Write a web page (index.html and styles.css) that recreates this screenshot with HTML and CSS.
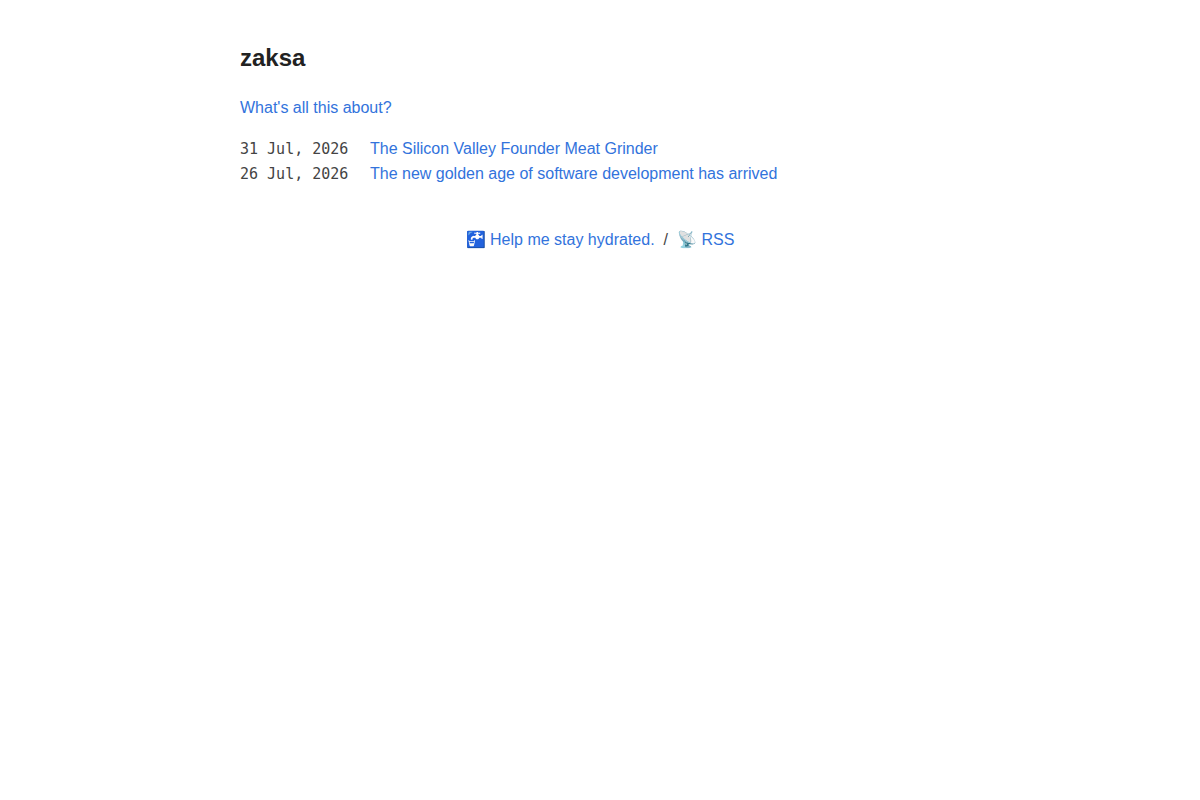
FILE: index.html
```html
<!DOCTYPE html>
<html lang="en">
<head>
  <meta charset="UTF-8">
  <meta name="viewport" content="width=device-width, initial-scale=1.0">
  <title>zaksa</title>
  <link rel="stylesheet" href="styles.css">
</head>
<body>
  <header>
    <a class="title" href="/"><h1>zaksa</h1></a>
  </header>
  <main>
    <p><a href="/about">What's all this about?</a></p>
    <ul class="blog-posts">
      <li>
        <time datetime="2026-07-31">31 Jul, 2026</time>
        <a href="/founder-meat-grinder">The Silicon Valley Founder Meat Grinder</a>
      </li>
      <li>
        <time datetime="2026-07-26">26 Jul, 2026</time>
        <a href="/new-golden-age">The new golden age of software development has arrived</a>
      </li>
    </ul>
  </main>
  <footer>
    <a href="/hydrate">🚰 Help me stay hydrated.</a>
    <span>/</span>
    <a href="/feed">📡 RSS</a>
  </footer>
</body>
</html>
```

FILE: styles.css
```css
body {
  font-family: "Liberation Sans", Arial, sans-serif;
  font-size: 16px;
  line-height: 24px;
  max-width: 720px;
  margin: 0 auto;
  padding: 20px;
  background-color: #fff;
  color: #444;
}
h1 {
  font-size: 24px;
  line-height: 36px;
  margin: 20px 0;
  color: #222;
}
p {
  margin: 0 0 17px;
}
a {
  color: #3273dc;
  text-decoration: none;
}
a:hover {
  text-decoration: underline;
}
.blog-posts {
  list-style: none;
  margin: 0;
  padding: 0;
}
.blog-posts li {
  display: flex;
  padding-bottom: 1px;
}
.blog-posts time {
  flex: 0 0 130px;
  font-family: "DejaVu Sans Mono", monospace;
  font-size: 15px;
}
footer {
  display: flex;
  justify-content: center;
  gap: 9px;
  padding: 41px 0;
}
```
